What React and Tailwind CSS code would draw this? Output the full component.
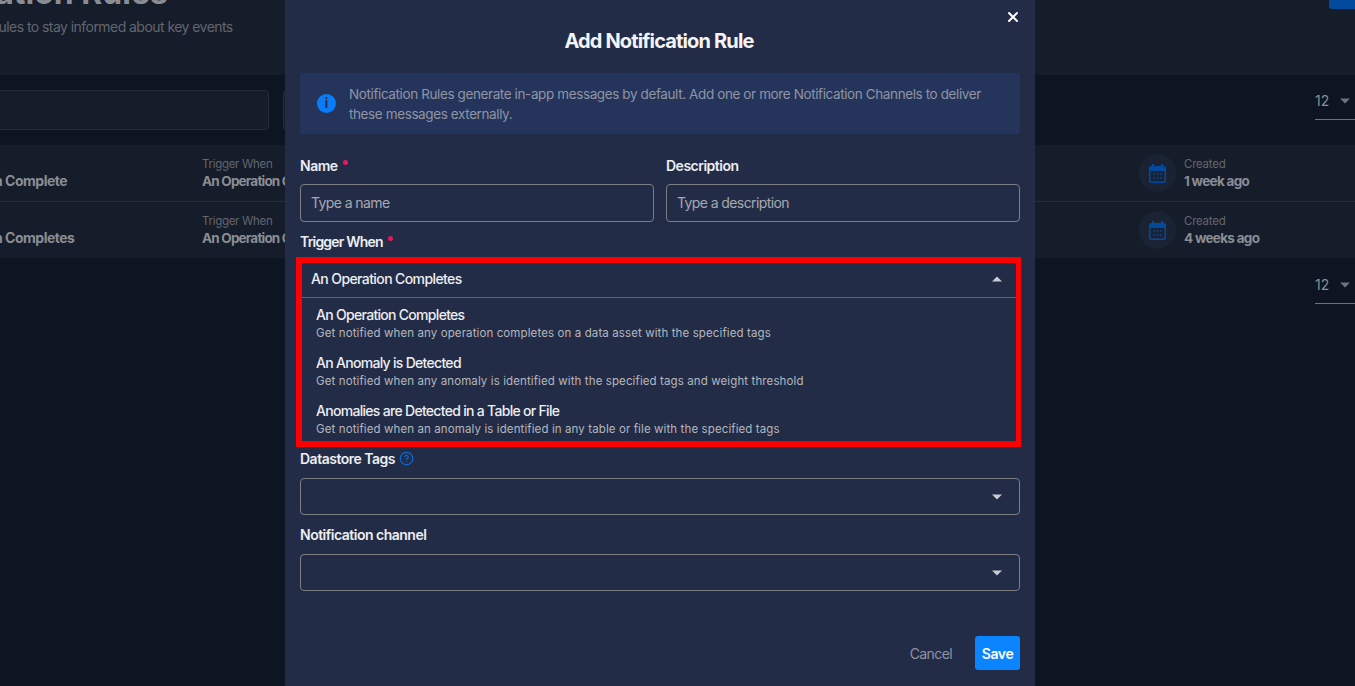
import { X, CircleHelp } from 'lucide-react';

const Caret = ({ up, className = '' }) => (
  <svg width="10" height="6" viewBox="0 0 10 6" className={className}>
    <path d={up ? 'M0 5.5L5 0.5L10 5.5Z' : 'M0 0.5L5 5.5L10 0.5Z'} fill="currentColor" />
  </svg>
);

// filled calendar, the one from the table rows
const CalendarIcon = () => (
  <svg width="17" height="19" viewBox="0 0 17 19" className="text-[#024a9b]">
    <path d="M3 0h2v2h7V0h2v2h1a2 2 0 0 1 2 2v13a2 2 0 0 1-2 2H2a2 2 0 0 1-2-2V4a2 2 0 0 1 2-2h1V0zM1.5 7v9.5a1 1 0 0 0 1 1h12a1 1 0 0 0 1-1V7h-14z" fill="currentColor" />
    <path d="M4 9h2v2H4zM7.5 9h2v2h-2zM11 9h2v2h-2zM4 13h2v2H4zM7.5 13h2v2h-2zM11 13h2v2h-2z" fill="currentColor" opacity="0.65" />
  </svg>
);

const Row = ({ name, created, bordered }) => (
  <div className={`flex items-center ${bordered ? 'h-[57px] border-b border-[#262c3a]' : 'h-[56px]'}`}>
    <div className="w-[202px] shrink-0 overflow-hidden pt-[14px]">
      <p className="-ml-[82px] whitespace-nowrap text-[14px] font-bold tracking-[-0.5px] text-[#8a8d94]">{name}</p>
    </div>
    <div className="w-[80px] shrink-0">
      <p className="whitespace-nowrap text-[11.5px] leading-[16px] tracking-[-0.3px] text-[#62666f]">Trigger When</p>
      <p className="whitespace-nowrap text-[13.5px] font-bold leading-[18px] tracking-[-0.8px] text-[#8a8d94]">An Operation Completes</p>
    </div>
    <div className="ml-[857px] flex items-center gap-[8px]">
      <div className="flex h-[38px] w-[37px] items-center justify-center rounded-full bg-[#1a2334]">
        <CalendarIcon />
      </div>
      <div>
        <p className="text-[11.5px] leading-[16px] tracking-[-0.25px] text-[#62666f]">Created</p>
        <p className="text-[13.5px] font-bold leading-[18px] tracking-[-0.7px] text-[#8a8d94]">{created}</p>
      </div>
    </div>
  </div>
);

const PageSize = () => (
  <div className="flex h-[38px] w-[40px] items-center justify-between border-b border-[#6d7078] pr-[5px] text-[14px] text-[#8a8d94]">
    12
    <Caret className="text-[#6f7279]" />
  </div>
);

const Label = ({ children, required }) => (
  <div className="flex h-[18px] items-center text-[14px] font-semibold tracking-[-0.5px] text-[#eceef2]">
    {children}
    {required && <span className="ml-[5px] mb-[6px] h-[5px] w-[5px] rounded-full bg-[#e8175d]" />}
  </div>
);

const Input = ({ placeholder }) => (
  <div className="mt-[10px] flex h-[38px] items-center rounded-[4px] border border-[#7d7f85] px-[10px] pb-[1px] text-[14px] tracking-[-0.6px] text-[#a6a9b0]">
    {placeholder}
  </div>
);

const Select = () => (
  <div className="mt-[11px] flex h-[37px] items-center justify-end rounded-[4px] border border-[#7d7f85] pr-[17px]">
    <Caret className="text-[#c9cbd0]" />
  </div>
);

const Option = ({ title, desc }) => (
  <div className="flex h-[48px] flex-col justify-center px-[14px] pt-[3px]">
    <p className="text-[14px] font-medium leading-[19px] tracking-[-0.7px] text-[#eceef2]">{title}</p>
    <p className="text-[11.5px] leading-[19px] tracking-[0.11px] text-[#b4b7bd]">{desc}</p>
  </div>
);

export default function App() {
  return (
    <div className="relative h-[686px] w-[1355px] overflow-hidden bg-[#0d1422] font-['Inter',sans-serif]">
      {/* page behind */}
      <header className="flex h-[75px] justify-between bg-[#151c2a]">
        <div className="overflow-hidden">
          <h1 className="-ml-[110px] -mt-[25px] whitespace-nowrap text-[32px] font-bold leading-[36px] text-[#8a8d94]">Notification Rules</h1>
          <p className="-ml-[121px] mt-[5px] whitespace-nowrap text-[14px] tracking-[-0.55px] text-[#62666f]">Create notification rules to stay informed about key events</p>
        </div>
        <div className="h-[9px] w-[26px] rounded-bl-[3px] bg-[#024a9b]" />
      </header>
      <div className="flex h-[70px] justify-between">
        <div className="flex items-center gap-[14px]">
          <div className="h-[40px] w-[269px] rounded-r-[4px] border border-l-0 border-[#262c3a] bg-[#151c2a]" />
          <div className="h-[40px] w-[10px] rounded-l-[4px] border border-r-0 border-[#262c3a] bg-[#151c2a]" />
        </div>
        <div className="mt-[7px]">
          <PageSize />
        </div>
      </div>
      <div className="bg-[#151c2a]">
        <Row name="An Operation Complete" created="1 week ago" bordered />
        <Row name="An Operation Completes" created="4 weeks ago" />
      </div>
      <div className="mt-[8px] flex justify-end">
        <PageSize />
      </div>

      {/* modal */}
      <div className="absolute left-[285px] top-0 h-[686px] w-[750px] bg-[#232c47] px-[15px]">
        <button className="absolute right-[14px] top-[9px] text-white">
          <X size={16} strokeWidth={3} />
        </button>
        <h2 className="pt-[29px] pr-[2px] text-center text-[20px] font-bold leading-[25px] tracking-[-0.85px] text-[#f3f4f6]">Add Notification Rule</h2>
        <div className="mt-[19px] flex h-[61px] items-center rounded-[4px] bg-[#24345a] pl-[17px] pr-[30px]">
          <div className="flex h-[19px] w-[19px] shrink-0 items-center justify-center rounded-full bg-[#0a7cf7]">
            <span className="text-[13px] font-bold leading-none text-[#232c47]">i</span>
          </div>
          <p className="ml-[13px] text-[13.5px] leading-[20px] tracking-[-0.39px] text-[#8f95a5]">
            Notification Rules generate in-app messages by default. Add one or more Notification Channels to deliver these messages externally.
          </p>
        </div>

        <div className="mt-[22px] grid grid-cols-2 gap-x-[12px]">
          <div>
            <Label required>Name</Label>
            <Input placeholder="Type a name" />
          </div>
          <div>
            <Label>Description</Label>
            <Input placeholder="Type a description" />
          </div>
        </div>

        <div className="mt-[10px]">
          <Label required><span className="tracking-[-0.8px]">Trigger When</span></Label>
        </div>
        <div className="-ml-[4px] mt-[7px] w-[725px] border-[6px] border-r-[5px] border-[#ff0000]">
          <div className="flex h-[35px] items-center justify-between border-b border-[#1976d2] pb-[3px] pl-[9px] pr-[14px] text-[14px] font-medium tracking-[-0.6px] text-[#eceef2]">
            An Operation Completes
            <Caret up className="text-[#c9cbd0]" />
          </div>
          <Option title="An Operation Completes" desc="Get notified when any operation completes on a data asset with the specified tags" />
          <Option title="An Anomaly is Detected" desc="Get notified when any anomaly is identified with the specified tags and weight threshold" />
          <div className="-mb-[1px]">
            <Option title="Anomalies are Detected in a Table or File" desc="Get notified when an anomaly is identified in any table or file with the specified tags" />
          </div>
        </div>

        <div className="mt-[2px]">
          <Label>
            Datastore Tags
            <CircleHelp size={15} className="ml-[4px] text-[#0a6ad6]" />
          </Label>
          <Select />
        </div>
        <div className="mt-[10px]">
          <Label>Notification channel</Label>
          <Select />
        </div>

        <div className="mt-[45px] flex items-center justify-end gap-[23px]">
          <button className="text-[14px] tracking-[-0.6px] text-[#8f92a0]">Cancel</button>
          <button className="h-[34px] w-[45px] rounded-[3px] bg-[#0a84ff] text-[14px] font-semibold tracking-[-0.4px] text-white">Save</button>
        </div>
      </div>
    </div>
  );
}
